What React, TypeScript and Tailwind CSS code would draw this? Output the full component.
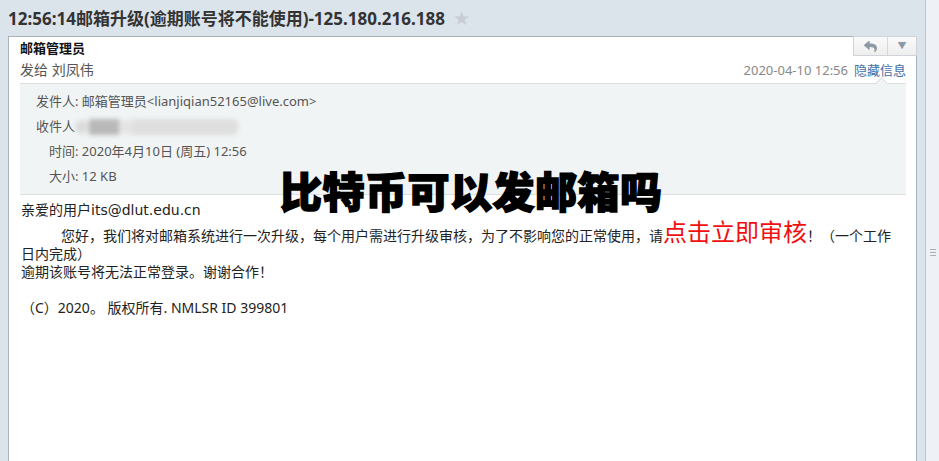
import { FaReply } from "react-icons/fa";

const cjk = "font-['Noto_Sans','Noto_Sans_CJK_SC',sans-serif]";

export default function App() {
  return (
    <div className={`flex h-[461px] w-[939px] overflow-hidden bg-[#dbe3eb] ${cjk}`}>
      <div className="relative flex w-[925px] flex-col px-[8px]">
        {/* title bar */}
        <div className="flex h-[36px] items-center gap-[8px]">
          <h1 className="text-[17px] font-bold leading-none text-[#333]">
            12:56:14邮箱升级(逾期账号将不能使用)-125.180.216.188
          </h1>
          <span className="font-['DejaVu_Sans',sans-serif] text-[19px] leading-none text-[#c6cdd4]">★</span>
        </div>

        {/* mail panel */}
        <div className="flex-1 border border-b-0 border-[#a9b3bd] bg-white">
          <div className="flex justify-between pl-[11px] pr-[10px]">
            <div className="leading-[22px]">
              <div className="text-[13px] font-bold text-[#111]">邮箱管理员</div>
              <div className="text-[14px] text-[#555]">发给 刘凤伟</div>
            </div>
            <div className="flex flex-col items-end">
              <div className="-mr-[11px] -mt-px flex h-[20px] border border-[#d0d4d8] bg-gradient-to-b from-[#fafafa] to-[#eeeeee]">
                <button className="flex w-[34px] items-center justify-center border-r border-[#d6d9dc]">
                  <FaReply size={13} color="#8d9aa6" />
                </button>
                <button className="flex w-[28px] items-center justify-center text-[9px] text-[#8d9aa6]">▼</button>
              </div>
              <div className="mt-[3px] text-[13px] leading-[22px]">
                <span className="text-[#888]">2020-04-10 12:56</span>
                <span className="ml-[6px] text-[#3f6ea5]">隐藏信息</span>
              </div>
            </div>
          </div>

          {/* details */}
          <div className="relative ml-[11px] mr-[10px] mt-[2px] border-y border-[#dcdfe0] bg-[#f1f4f4] py-[5px] text-[13px] leading-[25px] text-[#555]">
            <div className="absolute -top-[5px] left-[857px] h-[9px] w-[9px] rotate-45 border-l border-t border-[#dcdfe0] bg-[#f1f4f4]" />
            <div className="pl-[16px]">发件人: 邮箱管理员&lt;lianjiqian52165@live.com&gt;</div>
            <div className="flex items-center pl-[16px]">
              <span>收件人</span>
              <span className="flex h-[16px] items-center blur-[2px]">
                <span className="h-[14px] w-[14px] rounded-full bg-[#dcdcdc]" />
                <span className="h-[16px] w-[30px] bg-[#b9b9b9]" />
                <span className="h-[14px] w-[14px] bg-[#e4e4e4]" />
                <span className="h-[16px] w-[106px] rounded-r-full bg-[#dedede]" />
              </span>
            </div>
            <div className="pl-[29px]">时间: 2020年4月10日 (周五) 12:56</div>
            <div className="pl-[29px]">大小: 12 KB</div>
          </div>

          {/* body */}
          <div className="w-[900px] px-[12px] pt-[6px] text-[14px] leading-[18px] text-[#222]">
            <p>
              亲爱的用户<span className="font-['DejaVu_Sans',sans-serif] text-[14px]">its@dlut.edu.cn</span>
            </p>
            <p className="indent-[40px]">
              您好，我们将对邮箱系统进行一次升级，每个用户需进行升级审核，为了不影响您的正常使用，请
              <a className="text-[24px] leading-[26px] text-[#f01010]">点击立即审核</a>！（一个工作日内完成）
            </p>
            <p>逾期该账号将无法正常登录。谢谢合作！</p>
            <p className="h-[18px]" />
            <p>（C）2020。 版权所有. NMLSR ID 399801</p>
          </div>
        </div>

        {/* watermark */}
        <div className="absolute left-[280px] top-[171px] text-[42px] font-black leading-none tracking-[0.5px] text-black [-webkit-text-stroke:1.5px_#000]">
          比特币可以发邮箱吗
        </div>
      </div>

      {/* scrollbar */}
      <div className="flex w-[14px] flex-col items-center border-l border-[#bcc5ce] bg-[#eef1f5]">
        <div className="mt-[249px] flex flex-col gap-[2px]">
          <span className="block h-px w-[6px] bg-[#a9b0b8]" />
          <span className="block h-px w-[6px] bg-[#a9b0b8]" />
          <span className="block h-px w-[6px] bg-[#a9b0b8]" />
        </div>
      </div>
    </div>
  );
}
